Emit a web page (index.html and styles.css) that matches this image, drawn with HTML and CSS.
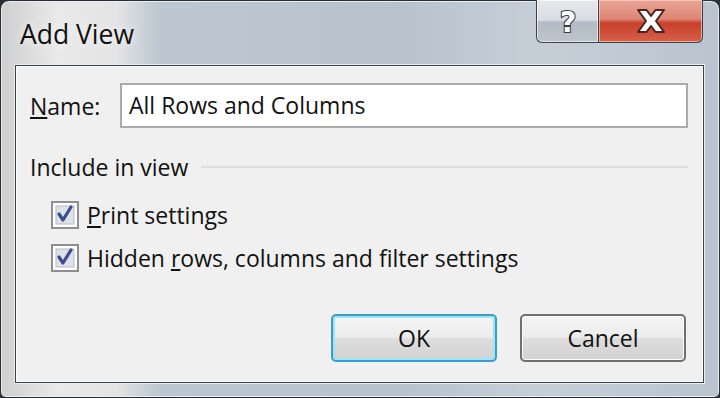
FILE: index.html
```html
<!DOCTYPE html>
<html lang="en">
<head>
    <meta charset="UTF-8">
    <meta name="viewport" content="width=device-width, initial-scale=1.0">
    <title>Add View</title>
    <link rel="stylesheet" href="styles.css">
</head>
<body>
    <div class="window">
        <!-- Barra de título -->
        <div class="titlebar">
            <div class="title">Add View</div>
            <div class="caption-buttons">
                <div class="cap-btn help">
                    <svg width="30" height="34" viewBox="0 0 30 34">
                        <text x="15" y="28" text-anchor="middle" class="help-glyph">?</text>
                    </svg>
                </div>
                <div class="cap-btn close">
                    <svg width="32" height="26" viewBox="0 0 32 26">
                        <path d="M3 2 H11.5 L16 8 L20.5 2 H29 L21 13 L29 24 H20.5 L16 18 L11.5 24 H3 L11 13 Z" fill="#ffffff" stroke="#4a2420" stroke-width="2" stroke-linejoin="round"/>
                    </svg>
                </div>
            </div>
        </div>

        <!-- Conteúdo -->
        <div class="client">
            <div class="name-row">
                <label class="name-label"><u>N</u>ame:</label>
                <div class="textbox">All Rows and Columns</div>
            </div>

            <div class="group">
                <span class="group-title">Include in view</span>
                <span class="group-line"></span>
            </div>

            <div class="check-row">
                <svg class="checkbox" width="28" height="28" viewBox="0 0 28 28">
                    <rect x="1" y="1" width="26" height="26" fill="#ffffff" stroke="#8e8f8f" stroke-width="2"/>
                    <rect x="5" y="5" width="18" height="18" fill="#dde1e8" stroke="#b7bcc6" stroke-width="1"/>
                    <path d="M8 13 L12 19 L20 6" fill="none" stroke="#3d4c8c" stroke-width="3.2" stroke-linecap="round" stroke-linejoin="round"/>
                </svg>
                <span><u>P</u>rint settings</span>
            </div>
            <div class="check-row">
                <svg class="checkbox" width="28" height="28" viewBox="0 0 28 28">
                    <rect x="1" y="1" width="26" height="26" fill="#ffffff" stroke="#8e8f8f" stroke-width="2"/>
                    <rect x="5" y="5" width="18" height="18" fill="#dde1e8" stroke="#b7bcc6" stroke-width="1"/>
                    <path d="M8 13 L12 19 L20 6" fill="none" stroke="#3d4c8c" stroke-width="3.2" stroke-linecap="round" stroke-linejoin="round"/>
                </svg>
                <span>Hidden <u>r</u>ows, columns and filter settings</span>
            </div>

            <div class="button-row">
                <div class="button default">OK</div>
                <div class="button">Cancel</div>
            </div>
        </div>
    </div>
</body>
</html>
```

FILE: styles.css
```css
body {
    margin: 0;
    padding: 0;
    background-color: #2a2f36;
    font-family: "Open Sans", "Noto Sans", sans-serif;
}

.window {
    width: 720px;
    height: 398px;
    box-sizing: border-box;
    border: 1px solid #2b2f35;
    border-radius: 9px 9px 6px 6px;
    padding: 0 15px 14px 14px;
    display: flex;
    flex-direction: column;
    background: linear-gradient(90deg, #cfcfcf 0%, #e9e9e9 8%, #e4e4e4 16%, #bcc7d1 22%, #b7c2cd 55%, #c6cfd8 75%, #b9c4cf 100%);
    box-shadow: inset 0 0 0 1px #e8edf2;
}

/* Barra de título */
.titlebar {
    height: 64px;
    display: flex;
    justify-content: space-between;
    align-items: flex-start;
}

.title {
    margin: 15px 0 0 5px;
    font-size: 26.5px;
    color: #111;
    text-shadow: 0 0 8px rgba(255, 255, 255, 0.9);
}

.caption-buttons {
    display: flex;
    margin-top: -1px;
    margin-right: 1px;
}

.cap-btn {
    height: 43px;
    box-sizing: border-box;
    display: flex;
    align-items: center;
    justify-content: center;
    border: 1px solid #3b434d;
    border-top: none;
}

.help {
    width: 62px;
    border-radius: 0 0 0 6px;
    border-right: none;
    background: linear-gradient(180deg, #e6e9ec 0%, #d8dde2 48%, #b3bcc5 52%, #bcc5ce 100%);
    box-shadow: inset 0 0 0 1px rgba(255, 255, 255, 0.6);
}

.help-glyph {
    font-family: "DejaVu Sans", sans-serif;
    font-size: 28px;
    font-weight: bold;
    fill: #ffffff;
    stroke: #3a3f46;
    stroke-width: 2.2px;
    paint-order: stroke fill;
}

.close {
    width: 105px;
    border-radius: 0 0 6px 0;
    background: linear-gradient(180deg, #eaa597 0%, #de8574 45%, #c8402b 55%, #d8604a 100%);
    box-shadow: inset 0 0 0 1px rgba(255, 220, 210, 0.6);
}

/* Área cliente */
.client {
    flex: 1;
    border: 1px solid #3c4148;
    background-color: #f0f0f0;
    box-shadow: inset 0 0 0 1px #ffffff, 0 0 0 1px #e9eef2;
    padding: 17px 15px 20px 14px;
    font-size: 23px;
    color: #111;
    display: flex;
    flex-direction: column;
}

.name-row {
    display: flex;
    align-items: center;
}

.name-label {
    width: 90px;
}

.textbox {
    flex: 1;
    height: 45px;
    box-sizing: border-box;
    border: 2px solid #a9abaf;
    background-color: #fff;
    padding-left: 7px;
    line-height: 40px;
}

.group {
    display: flex;
    align-items: center;
    margin-top: 22px;
    height: 34px;
}

.group-line {
    flex: 1;
    height: 2px;
    margin-left: 13px;
    background-color: #dcdfe2;
}

.check-row {
    display: flex;
    align-items: center;
    height: 43px;
    margin-left: 21px;
}

.checkbox {
    margin-right: 8px;
    flex-shrink: 0;
}

.group + .check-row {
    margin-top: 9px;
}

.button-row {
    margin-top: auto;
    display: flex;
    justify-content: flex-end;
    gap: 23px;
    padding-right: 2px;
}

.button {
    width: 166px;
    height: 48px;
    box-sizing: border-box;
    border: 2px solid #707070;
    border-radius: 5px;
    display: flex;
    align-items: center;
    justify-content: center;
    background: linear-gradient(180deg, #f4f4f4 0%, #ececec 48%, #dddddd 52%, #d2d2d2 100%);
    box-shadow: inset 0 0 0 1px #fbfbfb;
}

.default {
    border-color: #3c9dc8;
    box-shadow: inset 0 0 0 2px #9fe3f7;
}
```
